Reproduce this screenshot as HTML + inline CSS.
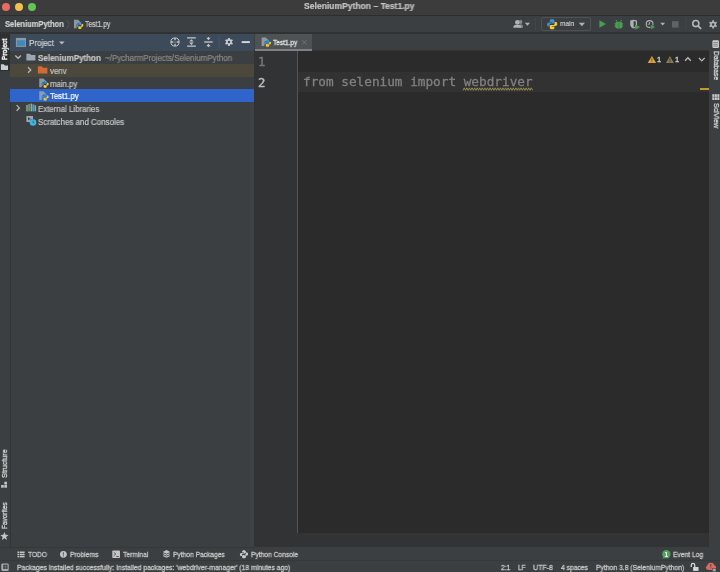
<!DOCTYPE html>
<html><head><meta charset="utf-8"><title>SeleniumPython – Test1.py</title>
<style>
html,body{margin:0;padding:0}
body{width:720px;height:572px;overflow:hidden;position:relative;background:#3c3f41;font-family:"Liberation Sans",sans-serif;font-size:8.3px;color:#c6c6c6;line-height:1}
.a{position:absolute}
.t{will-change:transform;-webkit-text-stroke:0.2px;position:absolute;white-space:nowrap;line-height:10px;height:10px;transform:scaleX(var(--k,1));transform-origin:0 0}
.s{font-size:7.5px;-webkit-text-stroke:0.3px}
.vl{color:#d0d0d0;will-change:transform;-webkit-text-stroke:0.3px;position:absolute;white-space:nowrap;line-height:10px;height:10px;transform-origin:0 0;transform:rotate(-90deg) scaleX(var(--k,1));font-size:7.7px}
.vr{color:#d0d0d0;will-change:transform;-webkit-text-stroke:0.3px;position:absolute;white-space:nowrap;line-height:10px;height:10px;transform-origin:0 0;transform:rotate(90deg) scaleX(var(--k,1));font-size:7.7px}
svg{position:absolute;overflow:visible}
#title{left:0;top:0;width:720px;height:14.6px;background:#3c3c3c}
.dot{position:absolute;top:2.6px;width:8px;height:8px;border-radius:50%}
#tbsep{left:0;top:14.6px;width:720px;height:1px;background:#2c2d2e}
#nav{left:0;top:15.6px;width:720px;height:17.9px;background:#3c3f41}
#lstripe{left:0;top:33.7px;width:10.5px;height:513.7px;background:#3c3f41;border-right:0.6px solid #323537;box-sizing:border-box}
#projbtn{left:0;top:33.7px;width:10.3px;height:37.3px;background:#2d2f30}
#phead{left:10.4px;top:33.7px;width:243.9px;height:17.3px;background:#3d4a59}
#tree{left:10.4px;top:51px;width:243.9px;height:496px;background:#3c3f41}
.row{position:absolute;left:0;width:243.9px;height:12.75px}
#tabs{left:254.3px;top:33.7px;width:455.7px;height:17px;background:#3c3f41;border-bottom:0.6px solid #323232;box-sizing:border-box}
#tab{left:254.5px;top:33.7px;width:57.5px;height:17px;background:#4e5254}
#tabul{left:254.5px;top:49.1px;width:57.5px;height:1.7px;background:#7c8186}
#gutter{left:254.3px;top:50.9px;width:43.2px;height:481.7px;background:#313335}
#gline{left:297.2px;top:50.9px;width:0.7px;height:481.7px;background:#555555}
#editor{left:297.9px;top:50.9px;width:412.1px;height:481.7px;background:#2b2b2b}
#curline{left:297.9px;top:71.6px;width:412.1px;height:20.8px;background:#323232}
#crumbs{left:254.3px;top:532.6px;width:455.7px;height:14.8px;background:#313335}
#rstripe{left:709.4px;top:33.7px;width:10.6px;height:513.7px;background:#3c3f41}
#bbar{left:0;top:547.4px;width:720px;height:13.4px;background:#3c3f41}
#sbar{left:0;top:560.2px;width:720px;height:11.8px;background:#3c3f41;border-top:0.5px solid #36393b;box-sizing:border-box}
.code{will-change:transform;-webkit-text-stroke:0.3px #808080;font-family:"DejaVu Sans Mono","Liberation Mono",monospace;font-size:12.7px;color:#808080;line-height:20.8px;height:20.8px;position:absolute;white-space:pre;transform:scaleX(var(--k,1));transform-origin:0 0}
.ln{will-change:transform;-webkit-text-stroke:0.45px;font-family:"DejaVu Sans Mono","Liberation Mono",monospace;font-size:12.2px;position:absolute;line-height:20.8px;height:20.8px}
</style></head><body>

<!-- title bar -->
<div id="title" class="a">
  <div class="dot" style="left:2.2px;background:#ec6a5e"></div>
  <div class="dot" style="left:14.9px;background:#f4bf4f"></div>
  <div class="dot" style="left:27.7px;background:#61c554"></div>
</div>
<div class="t" style="left:304.4px;top:0.8px;font-weight:bold;font-size:8.6px;color:#c4c4c4;--k:0.9944">SeleniumPython – Test1.py</div>
<div id="tbsep" class="a"></div>

<!-- navigation / toolbar -->
<div id="nav" class="a"></div>
<div class="t" style="left:5px;top:19.1px;font-weight:bold;font-size:8.3px;color:#d2d2d2;--k:0.9044">SeleniumPython</div>
<div class="t" style="left:85px;top:19.1px;font-size:8.3px;color:#cecece;--k:0.8186">Test1.py</div>

<div class="t" style="left:560px;top:19.200px;font-size:8px;--k:0.8187">main</div>
<div class="a" style="left:0;top:32.4px;width:720px;height:1.3px;background:#303234"></div>
<!-- left stripe -->
<div id="lstripe" class="a"></div>
<div id="projbtn" class="a"></div>
<div class="vl" style="left:-0.2px;top:59.9px;font-weight:bold;color:#f6f6f6;--k:0.8249">Project</div>
<div class="vl" style="left:-0.4px;top:478px;--k:0.9166">Structure</div>
<div class="vl" style="left:-0.4px;top:529.2px;--k:0.8474">Favorites</div>

<!-- project panel -->
<div id="phead" class="a"></div>
<div class="t" style="left:28.5px;top:37.8px;color:#d0d4d8;--k:0.9679">Project</div>
<div id="tree" class="a">
  <div class="row" style="top:12.75px;background:#4c483c"></div>
  <div class="row" style="top:38.25px;background:#2f65ca"></div>
</div>
<div class="t" style="left:38.3px;top:53.2px;font-weight:bold;--k:0.9675">SeleniumPython</div>
<div class="t" style="left:105.1px;top:53.2px;color:#8a8a8a;--k:0.9586">~/PycharmProjects/SeleniumPython</div>
<div class="t" style="left:49.7px;top:65.9px;--k:0.9469">venv</div>
<div class="t" style="left:49.7px;top:78.6px;--k:0.9394">main.py</div>
<div class="t" style="left:49.7px;top:91.3px;color:#ffffff;--k:0.9254">Test1.py</div>
<div class="t" style="left:38px;top:103.9px;--k:0.9479">External Libraries</div>
<div class="t" style="left:38px;top:116.6px;--k:0.9584">Scratches and Consoles</div>

<div class="a" style="left:249.8px;top:102px;width:4.5px;height:445.4px;background:#3f4244"></div>
<div class="a" style="left:10px;top:102px;width:0.8px;height:445px;background:#323537"></div>
<!-- editor -->
<div id="tabs" class="a"></div>
<div id="tab" class="a"></div>
<div id="tabul" class="a"></div>
<div class="t s" style="left:272.8px;top:37.5px;color:#e2e2e2;--k:0.8662">Test1.py</div>
<div id="gutter" class="a"></div>
<div id="gline" class="a"></div>
<div id="editor" class="a"></div>
<div id="curline" class="a"></div>
<div class="ln" style="left:257.8px;top:52.3px;color:#757779">1</div>
<div class="ln" style="left:257.8px;top:73.1px;color:#bcbcbc">2</div>
<div class="code" style="left:302.5px;top:72.4px;--k:1.0019">from selenium import webdriver</div>
<div id="crumbs" class="a"></div>

<!-- right stripe -->
<div id="rstripe" class="a"></div>
<div class="vr" style="left:720.8px;top:50.8px;--k:0.8869">Database</div>
<div class="vr" style="left:720.8px;top:103px;--k:0.9190">SciView</div>

<!-- inspection widget -->
<div class="t s" style="left:657.3px;top:54.8px;color:#d4d4d4">1</div>
<div class="t s" style="left:675.1px;top:54.8px;color:#d4d4d4">1</div>
<div class="a" style="left:700px;top:87.9px;width:9.3px;height:1.9px;background:#c29a35"></div>

<!-- bottom tool bar -->
<div id="bbar" class="a"></div>
<div class="t s" style="left:27.8px;top:549.9px;--k:0.8778">TODO</div>
<div class="t s" style="left:70px;top:549.9px;--k:0.8963">Problems</div>
<div class="t s" style="left:122.9px;top:549.9px;--k:0.8926">Terminal</div>
<div class="t s" style="left:173.3px;top:549.9px;--k:0.8874">Python Packages</div>
<div class="t s" style="left:251.1px;top:549.9px;--k:0.8895">Python Console</div>
<div class="t s" style="left:672.8px;top:549.9px;--k:0.8940">Event Log</div>

<div class="a" style="left:0;top:547px;width:254.3px;height:0.6px;background:#353839"></div>
<!-- status bar -->
<div id="sbar" class="a"></div>
<div class="t s" style="left:17.3px;top:563px;--k:0.9072">Packages installed successfully: Installed packages: 'webdriver-manager' (18 minutes ago)</div>
<div class="t s" style="left:501px;top:563px;--k:0.8814">2:1</div>
<div class="t s" style="left:517.6px;top:563px;--k:0.8442">LF</div>
<div class="t s" style="left:533.1px;top:563px;--k:0.9365">UTF-8</div>
<div class="t s" style="left:561.2px;top:563px;--k:0.8957">4 spaces</div>
<div class="t s" style="left:596px;top:563px;--k:0.9040">Python 3.8 (SeleniumPython)</div>

<!--ICONS1-->
<svg width="720" height="572" viewBox="0 0 720 572" style="left:0;top:0">
<!-- nav breadcrumb -->
<path d="M66.8 19.8 L69.3 24.2 L66.8 28.6" fill="none" stroke="#5c6062" stroke-width="0.7"/>
<g transform="translate(73.3 19.4) scale(0.64)"><path d="M1 .5h6.500l4 4V6H7L5 8v6H1z" fill="#9aa7b0" opacity=".85"/><g transform="translate(4.700 4.100) scale(0.690)"><path d="M7.900 0C5.200 0 4.400 1.200 4.400 2.600V4.600H8.100V5.300H2.900C1.200 5.300 0 6.500 0 8.400C0 10.400 1.100 11.400 2.600 11.400H4.100V9.300C4.100 7.800 5.200 6.700 6.700 6.700H9.800C10.900 6.700 11.600 5.900 11.600 4.900V2.600C11.600 1.200 10.600 0 7.900 0Z" fill="#3f8fd0"/><path d="M8.100 16C10.800 16 11.600 14.800 11.600 13.400V11.400H7.900V10.700H13.100C14.800 10.700 16 9.500 16 7.600C16 5.600 14.900 4.600 13.400 4.600H11.900V6.700C11.900 8.200 10.800 9.300 9.300 9.300H6.200C5.100 9.300 4.400 10.100 4.400 11.100V13.400C4.400 14.800 5.400 16 8.100 16Z" fill="#f4c838"/></g></g>

<!-- toolbar right -->
<g fill="#afb1b3">
<g fill="#85888a"><circle cx="520.500" cy="22" r="1.900"/><path d="M518.500 27.800c0-2.600 0.700-3.600 2.200-3.600s2.400 1 2.400 3.600z"/></g><circle cx="517.300" cy="22.300" r="2.250"/><path d="M513.300 27.800c0-2.400 1.600-3.300 4-3.300s4 0.900 4 3.300z"/>
<path d="M524.800 22.800h5.200l-2.600 2.900z"/>
<path d="M578.8 22.8h6.2l-3.1 3.4z"/>
<path d="M660.3 22.8h4.8l-2.4 2.7z"/>
</g>
<rect x="535" y="18" width="0.700" height="12.400" fill="#46494b"/>
<rect x="685.500" y="18" width="0.700" height="12.400" fill="#46494b"/>
<rect x="541.6" y="17.6" width="49" height="13" rx="1.600" fill="none" stroke="#585b5d" stroke-width="0.700"/>
<!-- python logo in run config -->
<g transform="translate(547 19.100) scale(0.640)">
<path d="M7.9 0C5.2 0 4.4 1.2 4.4 2.6V4.6H8.1V5.3H2.9C1.2 5.3 0 6.5 0 8.4C0 10.4 1.1 11.4 2.6 11.4H4.1V9.3C4.1 7.8 5.2 6.7 6.7 6.7H9.8C10.9 6.7 11.6 5.9 11.6 4.9V2.6C11.6 1.2 10.6 0 7.9 0Z" fill="#3b8ed0"/>
<path d="M8.1 16C10.8 16 11.6 14.8 11.6 13.4V11.4H7.9V10.7H13.1C14.8 10.7 16 9.5 16 7.6C16 5.6 14.9 4.6 13.4 4.6H11.9V6.7C11.9 8.2 10.8 9.3 9.3 9.3H6.2C5.1 9.3 4.4 10.1 4.4 11.1V13.4C4.4 14.8 5.4 16 8.1 16Z" fill="#f4c838"/>
</g>
<!-- run -->
<path d="M599.400 20.300 L606 24 L599.400 27.800z" fill="#499c54"/>
<!-- debug bug -->
<g fill="#499c54"><rect x="615.300" y="21.700" width="7" height="6.900" rx="2"/><path d="M616.600 21.800l-1.100-1.700.7-.4 1.300 1.700zM621 21.800l1.100-1.700-.7-.4-1.300 1.700z"/><rect x="614.500" y="23.400" width="8.600" height="0.900"/><rect x="614.500" y="25.700" width="8.600" height="0.900"/></g>
<rect x="618.300" y="22.600" width="1" height="5.600" fill="#3d8547"/>
<!-- coverage -->
<path d="M630.2 20.6l3.4-.8 3.4.8v3.6c0 2.2-1.4 3.7-3.4 4.4-2-.7-3.4-2.2-3.4-4.4z" fill="#afb1b3"/>
<path d="M633.6 21v6.4c1.400-.6 2.200-1.700 2.200-3.200v-2.700z" fill="#3c3f41"/>
<path d="M635.4 24.4l4.800 2.600-4.800 2.700z" fill="#499c54"/>
<!-- profile -->
<circle cx="649.6" cy="24" r="3.4" fill="none" stroke="#afb1b3" stroke-width="1.1"/>
<path d="M649.6 22v2.200h-1.800" fill="none" stroke="#afb1b3" stroke-width="0.9"/>
<path d="M650.8 24.400l4.800 2.600-4.800 2.700z" fill="#499c54" stroke="#3c3f41" stroke-width="0.5"/>
<!-- stop -->
<rect x="672" y="21.2" width="6.600" height="6.400" fill="#606263"/>
<!-- search -->
<circle cx="695.800" cy="23.600" r="3.050" fill="none" stroke="#b4b6b8" stroke-width="1.600"/>
<path d="M698 25.800l3.100 3" stroke="#b4b6b8" stroke-width="1.700"/>
<!-- gear toolbar -->
<path d="M712.17 21.55 L712.23 20.29 L713.97 20.29 L714.03 21.55 L715.11 22.17 L716.22 21.59 L717.09 23.10 L716.03 23.78 L716.03 25.02 L717.09 25.70 L716.22 27.21 L715.11 26.63 L714.03 27.25 L713.97 28.51 L712.23 28.51 L712.17 27.25 L711.09 26.63 L709.98 27.21 L709.11 25.70 L710.17 25.02 L710.17 23.78 L709.11 23.10 L709.98 21.59 L711.09 22.17Z M711.85 24.40 a1.25 1.25 0 1 0 2.50 0 a1.25 1.25 0 1 0 -2.50 0Z" fill="#afb1b3" fill-rule="evenodd"/>

<!-- project header -->
<rect x="16.400" y="38.400" width="9" height="8" fill="#3b8bbd" stroke="#8e9aa4" stroke-width="1"/>
<rect x="16.400" y="38.400" width="9" height="1.800" fill="#8e9aa4"/>
<path d="M59 41.500h5.600l-2.800 3.100z" fill="#b8bcc0"/>
<g stroke="#c4c8cc" fill="none">
<circle cx="175" cy="42" r="4.100" stroke-width="1"/><circle cx="175" cy="42" r="0.600" fill="#c4c8cc" stroke="none"/>
<path d="M175 37.900v2.400M175 46.100v-2.400M170.900 42h2.400M179.100 42h-2.400" stroke-width="1.300"/>
<path d="M187.100 37.900h8.700M187.100 46.100h8.700" stroke-width="1.300"/>
<path d="M189.300 41.500l2.150-2.300 2.150 2.300zM189.300 42.600l2.150 2.300 2.150-2.300z" fill="#c4c8cc" stroke="none"/>
<path d="M204.200 42h8.500" stroke-width="1.300"/>
<path d="M206.300 37.700l2.150 2.500 2.150-2.500zM206.300 46.300l2.150-2.500 2.150 2.500z" fill="#c4c8cc" stroke="none"/>
<path d="M208.450 36.900v1.500M208.450 47.100v-1.500" stroke-width="0.900"/>
<path d="M241.700 42.100h8.200" stroke-width="1.900" stroke="#d4d8dc"/>
</g>
<rect x="218.800" y="36.300" width="0.700" height="12" fill="#4f5b68"/>
<path d="M228.09 39.09 L228.15 37.89 L229.85 37.89 L229.91 39.09 L230.97 39.71 L232.05 39.16 L232.90 40.63 L231.89 41.29 L231.89 42.51 L232.90 43.17 L232.05 44.64 L230.97 44.09 L229.91 44.71 L229.85 45.91 L228.15 45.91 L228.09 44.71 L227.03 44.09 L225.95 44.64 L225.10 43.17 L226.11 42.51 L226.11 41.29 L225.10 40.63 L225.95 39.16 L227.03 39.71Z M227.75 41.90 a1.25 1.25 0 1 0 2.50 0 a1.25 1.25 0 1 0 -2.50 0Z" fill="#c8ccd0" fill-rule="evenodd"/>
</svg>
<!--/ICONS1-->
<!--ICONS2-->
<svg width="720" height="572" viewBox="0 0 720 572" style="left:0;top:0">
<!-- tree chevrons -->
<g fill="none" stroke="#b4b6b8" stroke-width="1.300">
<path d="M15.300 55.500l2.800 2.800 2.800-2.800"/>
<path d="M28 67.200l2.800 2.800-2.800 2.800"/>
<path d="M16.600 105.100l2.800 2.800-2.800 2.800"/>
</g>
<!-- root folder -->
<path d="M26.400 53.800h3.600l1.200 1.300h4.200v5.400h-9z" fill="#9aa7b0"/>
<!-- venv folder -->
<path d="M37.900 66.300h3.800l1.300 1.400h4.400v5.900h-9.500z" fill="#d2693a"/>
<!-- py files -->
<g transform="translate(38.600 78.200) scale(0.64)"><path d="M1 .5h6.500l4 4V6H7L5 8v6H1z" fill="#9aa7b0" opacity=".85"/><g transform="translate(4.700 4.100) scale(0.690)"><path d="M7.900 0C5.200 0 4.400 1.200 4.400 2.600V4.600H8.100V5.300H2.900C1.200 5.300 0 6.500 0 8.400C0 10.400 1.100 11.400 2.600 11.400H4.100V9.300C4.100 7.800 5.200 6.700 6.700 6.700H9.800C10.900 6.700 11.600 5.900 11.600 4.900V2.600C11.600 1.200 10.600 0 7.900 0Z" fill="#3f8fd0"/><path d="M8.100 16C10.800 16 11.600 14.800 11.600 13.400V11.400H7.900V10.700H13.100C14.800 10.700 16 9.500 16 7.600C16 5.600 14.900 4.600 13.400 4.600H11.900V6.700C11.900 8.200 10.800 9.300 9.300 9.300H6.200C5.100 9.300 4.400 10.100 4.400 11.100V13.400C4.400 14.800 5.400 16 8.100 16Z" fill="#f4c838"/></g></g>
<g transform="translate(38.600 90.950) scale(0.64)"><path d="M1 .5h6.500l4 4V6H7L5 8v6H1z" fill="#9aa7b0" opacity=".85"/><g transform="translate(4.700 4.100) scale(0.690)"><path d="M7.900 0C5.200 0 4.400 1.200 4.400 2.600V4.600H8.100V5.300H2.900C1.200 5.300 0 6.500 0 8.400C0 10.400 1.100 11.400 2.600 11.400H4.100V9.300C4.100 7.800 5.200 6.700 6.700 6.700H9.800C10.900 6.700 11.600 5.900 11.600 4.900V2.600C11.600 1.200 10.600 0 7.900 0Z" fill="#3f8fd0"/><path d="M8.100 16C10.800 16 11.600 14.800 11.600 13.400V11.400H7.900V10.700H13.100C14.800 10.700 16 9.500 16 7.600C16 5.600 14.900 4.600 13.400 4.600H11.900V6.700C11.900 8.200 10.800 9.300 9.300 9.300H6.200C5.100 9.300 4.400 10.100 4.400 11.100V13.400C4.400 14.800 5.400 16 8.100 16Z" fill="#f4c838"/></g></g>
<!-- libraries -->
<rect x="26.300" y="105" width="1.400" height="6.400" fill="#9aa7b0"/>
<rect x="28.200" y="104" width="1.900" height="7.400" fill="#5fa04a"/>
<rect x="30.600" y="103.600" width="1.400" height="7.800" fill="#9aa7b0"/>
<rect x="32.300" y="104.400" width="2.100" height="7" fill="#45a5cf"/>
<rect x="34.700" y="105.400" width="1.400" height="6" fill="#9aa7b0"/>
<!-- scratches -->
<path d="M26.400 116.100h6.600v3.500h-2.800v2.500h-3.800z" fill="#9aa7b0"/>
<path d="M28 117.200l2.600 1.500-2.600 1.500z" fill="#3c3f41"/>
<circle cx="33" cy="122.500" r="3.300" fill="#40b6e0"/>
<path d="M33 120.600v2.100h1.300" stroke="#2b5a70" stroke-width="0.700" fill="none"/>

<!-- left stripe icons -->
<path d="M0.900 64.300h2.900l1 1.100h3.200v4.600h-7.100z" fill="#c8ccd0"/>
<g fill="#c4c4c4"><rect x="4.300" y="481.800" width="2.700" height="2.700"/><rect x="1.100" y="485" width="2.700" height="2.700"/><rect x="4.300" y="485" width="2.700" height="2.700"/></g>
<path d="M4.40 532.10 L5.52 534.86 L8.49 535.07 L6.21 536.99 L6.93 539.88 L4.40 538.30 L1.87 539.88 L2.59 536.99 L0.31 535.07 L3.28 534.86z" fill="#c4c4c4"/>

<!-- tab icon + close -->
<g transform="translate(261 37.100) scale(0.64)"><path d="M1 .5h6.500l4 4V6H7L5 8v6H1z" fill="#9aa7b0" opacity=".85"/><g transform="translate(4.700 4.100) scale(0.690)"><path d="M7.900 0C5.200 0 4.400 1.200 4.400 2.600V4.600H8.100V5.300H2.900C1.200 5.300 0 6.500 0 8.400C0 10.400 1.100 11.400 2.600 11.400H4.100V9.300C4.100 7.800 5.200 6.700 6.700 6.700H9.800C10.900 6.700 11.600 5.900 11.600 4.900V2.600C11.600 1.200 10.600 0 7.900 0Z" fill="#3f8fd0"/><path d="M8.100 16C10.800 16 11.600 14.800 11.600 13.400V11.400H7.900V10.700H13.100C14.800 10.700 16 9.500 16 7.600C16 5.600 14.900 4.600 13.400 4.600H11.900V6.700C11.900 8.200 10.800 9.300 9.300 9.300H6.200C5.100 9.300 4.400 10.100 4.400 11.100V13.400C4.400 14.800 5.400 16 8.100 16Z" fill="#f4c838"/></g></g>
<path d="M302.300 40.100l4.200 4.400M306.500 40.100l-4.200 4.400" stroke="#74787a" stroke-width="0.800"/>

<!-- inspection widget -->
<path d="M651.900 56l4.200 7h-8.400z" fill="#e2a53a"/>
<path d="M651.900 58.400v2.400M651.900 61.400v0.900" stroke="#5a4a20" stroke-width="0.900"/>
<path d="M669.900 56l4 7h-8z" fill="#8a7a58"/>
<path d="M669.900 58.400v2.400M669.900 61.400v0.900" stroke="#3a3428" stroke-width="0.900"/>
<g fill="none" stroke="#bcbcbc" stroke-width="1.300">
<path d="M685 60.800l2.900-3 2.900 3"/>
<path d="M698.900 57.900l2.900 3 2.900-3"/>
</g>
<!-- wavy underline -->
<path d="M463.00 90.35 L464.29 87.85 L465.58 90.35 L466.87 87.85 L468.16 90.35 L469.45 87.85 L470.74 90.35 L472.03 87.85 L473.32 90.35 L474.61 87.85 L475.90 90.35 L477.19 87.85 L478.48 90.35 L479.77 87.85 L481.06 90.35 L482.35 87.85 L483.64 90.35 L484.93 87.85 L486.22 90.35 L487.51 87.85 L488.80 90.35 L490.09 87.85 L491.38 90.35 L492.67 87.85 L493.96 90.35 L495.25 87.85 L496.54 90.35 L497.83 87.85 L499.12 90.35 L500.41 87.85 L501.70 90.35 L502.99 87.85 L504.28 90.35 L505.57 87.85 L506.86 90.35 L508.15 87.85 L509.44 90.35 L510.73 87.85 L512.02 90.35 L513.31 87.85 L514.60 90.35 L515.89 87.85 L517.18 90.35 L518.47 87.85 L519.76 90.35 L521.05 87.85 L522.34 90.35 L523.63 87.85 L524.92 90.35 L526.21 87.85 L527.50 90.35 L528.79 87.85 L530.08 90.35 L531.37 87.85 L532.66 90.35" fill="none" stroke="#b2a65a" stroke-width="0.750"/>

<!-- right stripe icons -->
<rect x="712.400" y="40.300" width="6.600" height="7.800" rx="1.300" fill="#cfcfcf"/><path d="M713.300 42.500h4.800M713.300 44.300h4.800M713.300 46.100h4.800" stroke="#505355" stroke-width="0.600"/>
<g fill="#c8c8c8"><rect x="712.3" y="94.2" width="2.100" height="2.700"/><rect x="714.8" y="94.2" width="2.100" height="2.700"/><rect x="717.3" y="94.2" width="2.100" height="2.700"/><rect x="712.3" y="97.3" width="2.100" height="2.700"/><rect x="714.8" y="97.3" width="2.100" height="2.700"/><rect x="717.3" y="97.3" width="2.100" height="2.700"/></g>

<!-- bottom bar icons -->
<g fill="#c4c4c4">
<rect x="17.500" y="551.5" width="1.900" height="1.500"/><rect x="20" y="551.5" width="4.600" height="1.500"/>
<rect x="17.500" y="553.7" width="1.900" height="1.500"/><rect x="20" y="553.7" width="4.600" height="1.500"/>
<rect x="17.500" y="555.9" width="1.900" height="1.500"/><rect x="20" y="555.9" width="4.600" height="1.500"/>
<circle cx="63.400" cy="554.300" r="3.400"/>
<rect x="112.300" y="550.500" width="7.700" height="7.600" rx="0.800"/>
<path d="M166.500 550.100l3.800 1.800-3.800 1.800-3.800-1.800z"/>
<path d="M163.700 553.300l2.800 1.300 2.800-1.300 0.900 0.700-3.700 1.800-3.700-1.800z"/>
<path d="M163.700 555.300l2.800 1.300 2.800-1.300 0.900 0.700-3.700 1.800-3.700-1.800z"/>
</g>
<path d="M63.400 552.300v2.400M63.400 555.400v1" stroke="#3c3f41" stroke-width="0.900"/>
<path d="M113.800 552.300l2 1.700-2 1.700M116.400 556.500h2.400" stroke="#3c3f41" stroke-width="0.800" fill="none"/>
<g transform="translate(239.900 550.200) scale(0.510)" fill="#cacaca">
<path d="M7.900 0C5.200 0 4.400 1.200 4.400 2.600V4.600H8.100V5.300H2.900C1.200 5.300 0 6.500 0 8.400C0 10.400 1.100 11.400 2.600 11.400H4.100V9.300C4.100 7.800 5.200 6.700 6.700 6.700H9.800C10.900 6.700 11.600 5.900 11.600 4.900V2.600C11.600 1.200 10.600 0 7.900 0Z"/>
<path d="M8.100 16C10.800 16 11.600 14.800 11.600 13.400V11.400H7.900V10.700H13.100C14.800 10.700 16 9.500 16 7.600C16 5.600 14.900 4.600 13.400 4.600H11.900V6.700C11.900 8.200 10.800 9.300 9.300 9.300H6.200C5.100 9.300 4.400 10.100 4.400 11.100V13.400C4.400 14.800 5.400 16 8.100 16Z"/>
</g>
<!-- event log -->
<circle cx="666.300" cy="554.200" r="4.150" fill="#4fa35a"/>
<path d="M663 557l-0.600 1.800 2.400-0.800z" fill="#499c54"/>
<text x="666.300" y="556.500" text-anchor="middle" font-family="Liberation Sans, sans-serif" font-weight="bold" font-size="6.400" fill="#ffffff">1</text>

<!-- status bar icons -->
<rect x="1.300" y="563.400" width="7.400" height="7.700" rx="1.300" fill="#a9abad"/>
<rect x="3.100" y="564.700" width="4.500" height="4.200" fill="#3c3f41"/>
<path d="M3.100 566.800h4.500M5.350 564.700v4.200" stroke="#8a8c8e" stroke-width="0.500"/>
<g fill="#d4d4d4"><rect x="693.100" y="567" width="5.400" height="3.900"/></g>
<path d="M691.300 567v-2a1.700 1.700 0 0 1 3.400 0v2" fill="none" stroke="#d4d4d4" stroke-width="1.300"/>
<circle cx="710.800" cy="566.400" r="3.600" fill="#e0685f"/>
<circle cx="707.900" cy="567.800" r="2" fill="#e0685f"/>
<circle cx="713.800" cy="567.600" r="2.300" fill="#e0685f"/>
<path d="M710.800 564v2.600M710.800 567.400v0.900" stroke="#3c3f41" stroke-width="0.900"/>
<rect x="712.400" y="568.300" width="3.600" height="3.400" fill="#9aa7b0" stroke="#3c3f41" stroke-width="0.500"/>
</svg>
<!--/ICONS2-->
</body></html>
